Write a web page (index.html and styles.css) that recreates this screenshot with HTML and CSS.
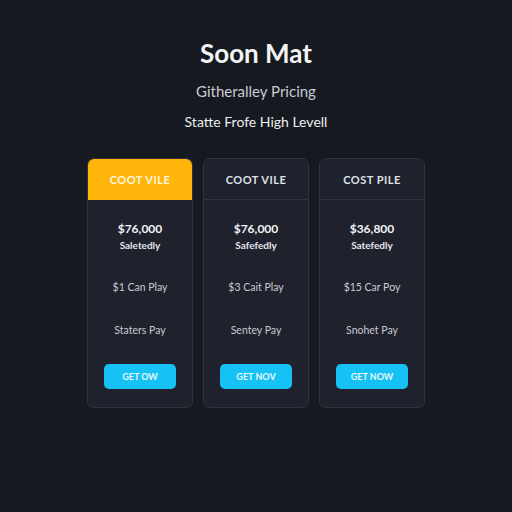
FILE: index.html
```html
<!DOCTYPE html>
<html lang="en">
<head>
  <meta charset="UTF-8">
  <title>Pricing</title>
  <link rel="stylesheet" href="styles.css">
</head>
<body>
  <div class="page">
    <!-- Header -->
    <h1>Soon Mat</h1>
    <p class="subtitle">Githeralley Pricing</p>
    <p class="tagline">Statte Frofe High Levell</p>

    <!-- Plans -->
    <div class="plans">
      <div class="plan featured">
        <div class="plan-head">COOT VILE</div>
        <div class="plan-body">
          <div class="price">$76,000</div>
          <div class="note">Saletedly</div>
          <div class="line">$1 Can Play</div>
          <div class="line">Staters Pay</div>
          <button class="btn">GET OW</button>
        </div>
      </div>
      <div class="plan">
        <div class="plan-head">COOT VILE</div>
        <div class="plan-body">
          <div class="price">$76,000</div>
          <div class="note">Safefedly</div>
          <div class="line">$3 Cait Play</div>
          <div class="line">Sentey Pay</div>
          <button class="btn">GET NOV</button>
        </div>
      </div>
      <div class="plan">
        <div class="plan-head">COST PILE</div>
        <div class="plan-body">
          <div class="price">$36,800</div>
          <div class="note">Satefedly</div>
          <div class="line">$15 Car Poy</div>
          <div class="line">Snohet Pay</div>
          <button class="btn">GET NOW</button>
        </div>
      </div>
    </div>
  </div>
</body>
</html>
```

FILE: styles.css
```css
* {
  margin: 0;
  padding: 0;
  box-sizing: border-box;
}

html, body {
  height: 100%;
}

body {
  font-family: Lato, "Open Sans", Arial, sans-serif;
  background: #16191f;
  color: #e8e9ee;
}

.page {
  display: flex;
  flex-direction: column;
  align-items: center;
  padding-top: 36px;
}

h1 {
  font-size: 26px;
  font-weight: 700;
  color: #f4f4f6;
  line-height: 34px;
}

.subtitle {
  margin-top: 12px;
  font-size: 15px;
  color: #c9cbd2;
}

.tagline {
  margin-top: 13px;
  font-size: 14px;
  color: #eceef2;
}

/* Plans */
.plans {
  display: flex;
  gap: 10px;
  margin-top: 28px;
}

.plan {
  width: 106px;
  height: 250px;
  background: #1f222c;
  border: 1px solid #30343f;
  border-radius: 7px;
  overflow: hidden;
  display: flex;
  flex-direction: column;
}

.plan-head {
  height: 41px;
  border-bottom: 1px solid #30343f;
  display: flex;
  align-items: center;
  justify-content: center;
  font-size: 11px;
  font-weight: 700;
  letter-spacing: 0.5px;
  color: #dfe1e7;
}

.featured .plan-head {
  background: #ffb50a;
  color: #fff6e0;
  border-bottom-color: #ffb50a;
}

.plan-body {
  flex: 1;
  display: flex;
  flex-direction: column;
  align-items: center;
  padding-top: 21px;
}

.price {
  font-size: 12px;
  font-weight: 700;
  color: #f2f3f6;
}

.note {
  margin-top: 3px;
  font-size: 10px;
  font-weight: 700;
  color: #e4e5ea;
}

.line {
  margin-top: 30px;
  font-size: 10.5px;
  color: #c8cad1;
}

.line + .line {
  margin-top: 31px;
}

.btn {
  margin-top: 28px;
  width: 72px;
  height: 25px;
  border: none;
  border-radius: 5px;
  background: #16c2f3;
  color: #e6f7ff;
  font-family: inherit;
  font-size: 9px;
  font-weight: 700;
}
```
